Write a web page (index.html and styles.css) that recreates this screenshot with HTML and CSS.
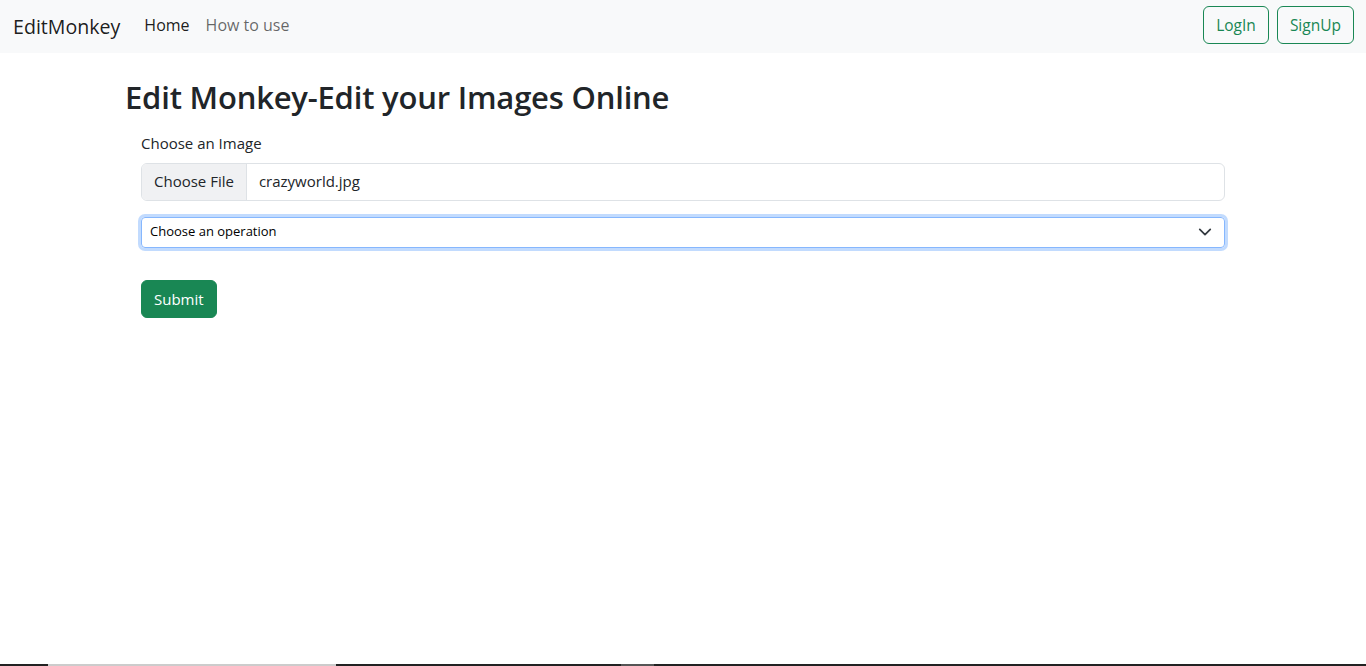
FILE: index.html
```html
<!DOCTYPE html>
<html lang="en">
<head>
<meta charset="utf-8">
<title>EditMonkey</title>
<link rel="stylesheet" href="styles.css">
</head>
<body>
<nav class="navbar">
  <div class="nav-left">
    <a class="brand" href="#">EditMonkey</a>
    <a class="nav-link active" href="#">Home</a>
    <a class="nav-link" href="#">How to use</a>
  </div>
  <div class="nav-right">
    <button class="btn-outline">LogIn</button>
    <button class="btn-outline">SignUp</button>
  </div>
</nav>
<main class="container">
  <h1 class="title">Edit Monkey-Edit your Images Online</h1>
  <form class="form">
    <label class="label">Choose an Image</label>
    <div class="file-input">
      <span class="file-btn">Choose File</span>
      <span class="file-name">crazyworld.jpg</span>
    </div>
    <div class="select">
      <span>Choose an operation</span>
      <svg class="chevron" width="16" height="16" viewBox="0 0 16 16"><path d="M2 5l6 6 6-6" fill="none" stroke="#343a40" stroke-width="2" stroke-linecap="round" stroke-linejoin="round"/></svg>
    </div>
    <button type="button" class="btn-success">Submit</button>
  </form>
</main>
<div class="taskbar"><span class="seg1"></span><span class="seg2"></span></div>
</body>
</html>
```
FILE: styles.css
```css
* { box-sizing: border-box; }
html, body { margin: 0; padding: 0; }
body {
  font-family: "Open Sans", "Noto Sans", sans-serif;
  font-size: 16px;
  line-height: 1.5;
  color: #212529;
  background: #fff;
  height: 666px;
  overflow: hidden;
}
a { text-decoration: none; }
.navbar {
  height: 53px;
  background: #f8f9fa;
  display: flex;
  align-items: center;
  justify-content: space-between;
  padding: 0 12px 3px 13px;
}
.nav-left { display: flex; align-items: center; }
.brand {
  font-size: 19.6px;
  color: rgba(0,0,0,.9);
  margin-right: 16px;
  padding-top: 4px;
}
.nav-link {
  font-size: 16px;
  color: rgba(0,0,0,.6);
  padding: 0 8px;
  font-weight: 500;
}
.nav-link.active { color: rgba(0,0,0,.9); }
.nav-right { display: flex; gap: 8px; }
.btn-outline {
  font-family: inherit;
  font-size: 15.5px;
  color: #198754;
  background: transparent;
  border: 1px solid #198754;
  border-radius: 6px;
  height: 38px;
  padding: 0 12px;
}
.container {
  width: 1140px;
  margin: 0 auto;
  padding: 0 12px;
}
.title {
  font-size: 31px;
  font-weight: 600;
  line-height: 1.2;
  margin: 26px 0 8px;
  letter-spacing: -0.2px;
}
.form { margin: 16px; }
.label {
  display: block;
  font-size: 15px;
  font-weight: 400;
  margin-bottom: 8px;
  color: #212529;
}
.file-input {
  display: flex;
  height: 38px;
  border: 1px solid #dee2e6;
  border-radius: 6px;
  overflow: hidden;
  margin-bottom: 16px;
  font-size: 15px;
}
.file-btn {
  background: #f0f1f3;
  border-right: 1px solid #dee2e6;
  padding: 0 12px;
  display: flex;
  align-items: center;
}
.file-name {
  padding: 0 12px;
  display: flex;
  align-items: center;
}
.select {
  display: flex;
  justify-content: space-between;
  align-items: center;
  height: 31px;
  border: 1px solid #86b7fe;
  border-radius: 4px;
  box-shadow: 0 0 0 3px rgba(13,110,253,.25);
  padding: 0 12px 0 8px;
  font-size: 13px;
  color: #000;
  margin-bottom: 32px;
}
.chevron { display: block; width: 14px; height: 14px; }
.btn-success {
  font-family: inherit;
  font-size: 15px;
  color: #fff;
  background: #198754;
  border: 1px solid #198754;
  border-radius: 6px;
  height: 38px;
  padding: 0 12px;
}
.taskbar {
  position: fixed;
  left: 0; right: 0; bottom: 0;
  height: 2px;
  background: #222;
}
.seg1 { position: absolute; left: 48px; width: 288px; top: 0; bottom: 0; background: #ccc; }
.seg2 { position: absolute; left: 621px; width: 33px; top: 0; bottom: 0; background: #555; }
```
